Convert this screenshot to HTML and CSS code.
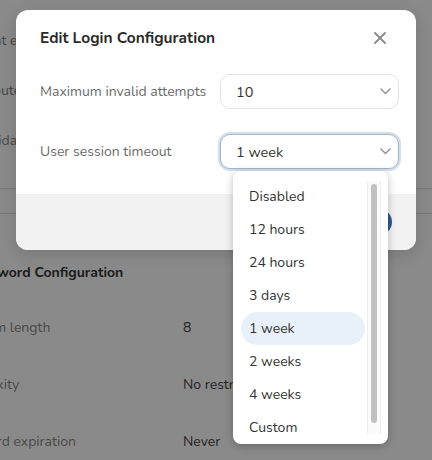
FILE: index.html
```html
<!DOCTYPE html>
<html>
<head>
<meta charset="utf-8">
<link rel="stylesheet" href="styles.css">
</head>
<body>
<div class="page">
  <div class="bg">
    <div class="bg-group">
      <div class="bg-row"><span class="bg-label">Account enabled</span><span class="bg-value">Yes</span></div>
      <div class="bg-row"><span class="bg-label">Contribute edits</span><span class="bg-value">Allowed</span></div>
      <div class="bg-row"><span class="bg-label">Consolidate sessions</span><span class="bg-value">Off</span></div>
    </div>
    <div class="bg-divider"></div>
    <div class="bg-heading">Password Configuration</div>
    <div class="bg-group">
      <div class="bg-row tall"><span class="bg-label shifted">Minimum length</span><span class="bg-value">8</span></div>
      <div class="bg-row tall"><span class="bg-label shifted">Complexity</span><span class="bg-value">No restrictions</span></div>
      <div class="bg-row tall"><span class="bg-label shifted">Password expiration</span><span class="bg-value">Never</span></div>
    </div>
  </div>
</div>
<div class="overlay"></div>
<div class="modal">
  <div class="modal-header">
    <h2 class="modal-title">Edit Login Configuration</h2>
    <svg class="close" width="12" height="12" viewBox="0 0 12 12"><path d="M1 1 L11 11 M11 1 L1 11" stroke="#8a8a8a" stroke-width="1.8" stroke-linecap="round"/></svg>
  </div>
  <div class="modal-body">
    <div class="field">
      <span class="field-label">Maximum invalid attempts</span>
      <div class="select">
        <span class="select-value">10</span>
        <svg class="chevron" width="11" height="7" viewBox="0 0 11 7"><path d="M1 1 L5.5 5.5 L10 1" fill="none" stroke="#9a9a9a" stroke-width="1.6" stroke-linecap="round" stroke-linejoin="round"/></svg>
      </div>
    </div>
    <div class="field">
      <span class="field-label">User session timeout</span>
      <div class="select-wrap">
        <div class="select focused">
          <span class="select-value">1 week</span>
          <svg class="chevron" width="11" height="7" viewBox="0 0 11 7"><path d="M1 1 L5.5 5.5 L10 1" fill="none" stroke="#9a9a9a" stroke-width="1.6" stroke-linecap="round" stroke-linejoin="round"/></svg>
        </div>
        <div class="dropdown">
          <ul class="options">
            <li class="option">Disabled</li>
            <li class="option">12 hours</li>
            <li class="option">24 hours</li>
            <li class="option">3 days</li>
            <li class="option selected">1 week</li>
            <li class="option">2 weeks</li>
            <li class="option">4 weeks</li>
            <li class="option">Custom</li>
            <li class="option">Never</li>
          </ul>
          <div class="scrolltrack"><div class="scrollthumb"></div></div>
        </div>
      </div>
    </div>
  </div>
  <div class="modal-footer">
    <button class="btn btn-cancel">Cancel</button>
    <button class="btn btn-save">Save</button>
  </div>
</div>
</body>
</html>
```

FILE: styles.css
```css
html, body {
  margin: 0;
  padding: 0;
}
body {
  width: 432px;
  height: 460px;
  overflow: hidden;
  position: relative;
  background: #ffffff;
  font-family: "Nunito", Lato, "Open Sans", sans-serif;
  color: #333333;
}
.page {
  width: 432px;
  height: 460px;
  overflow: hidden;
}
.bg {
  margin-left: -45px;
  width: 520px;
  padding-top: 15px;
}
.bg-row {
  display: flex;
  align-items: center;
  height: 50px;
  font-size: 14px;
}
.bg-row.tall {
  height: 57px;
}
.bg-label {
  width: 228px;
  color: #888888;
}
.bg-label.shifted {
  margin-left: -7px;
  width: 235px;
}
.bg-value {
  color: #444444;
}
.bg-divider {
  margin-top: 23px;
  height: 24px;
  border-top: 1px solid #e0e0e0;
  border-bottom: 1px solid #e0e0e0;
}
.bg-heading {
  margin-top: 48px;
  margin-left: 12px;
  height: 22px;
  line-height: 22px;
  font-size: 14px;
  font-weight: 700;
  color: #333333;
  margin-bottom: 15px;
}
.overlay {
  position: absolute;
  inset: 0;
  background: rgba(0, 0, 0, 0.46);
}
.modal {
  position: absolute;
  left: 16px;
  top: 10px;
  width: 400px;
  height: 240px;
  background: #ffffff;
  border-radius: 12px;
  display: flex;
  flex-direction: column;
  box-shadow: 0 4px 16px rgba(0, 0, 0, 0.15);
}
.modal-header {
  height: 64px;
  box-sizing: border-box;
  padding: 18px 30px 0 24px;
  display: flex;
  justify-content: space-between;
  align-items: flex-start;
}
.modal-title {
  margin: 0;
  font-size: 15.5px;
  line-height: 20px;
  font-weight: 700;
  color: #2a2a2a;
}
.close {
  margin-top: 4px;
}
.modal-body {
  padding: 0 17px 25px 24px;
  display: flex;
  flex-direction: column;
  gap: 25px;
}
.field {
  display: grid;
  grid-template-columns: 180px 179px;
  align-items: center;
}
.field-label {
  font-size: 14px;
  color: #6b6b6b;
}
.select-wrap {
  position: relative;
}
.select {
  height: 35px;
  box-sizing: border-box;
  border: 1px solid #e3e3e3;
  border-radius: 10px;
  display: flex;
  align-items: center;
  justify-content: space-between;
  padding: 0 7px 0 15px;
  font-size: 14.5px;
  color: #333333;
  background: #ffffff;
}
.select.focused {
  border-color: #a3b6ce;
  box-shadow: 0 0 0 2px #d3deeb;
}
.modal-footer {
  margin-top: auto;
  height: 56px;
  background: #f2f2f2;
  border-radius: 0 0 12px 12px;
  display: flex;
  align-items: center;
  justify-content: flex-end;
  gap: 12px;
  padding: 0 24px;
}
.btn {
  height: 26px;
  border-radius: 13px;
  border: none;
  font-family: inherit;
  font-size: 13px;
  padding: 0 18px;
}
.btn-cancel {
  background: transparent;
  color: #555555;
}
.btn-save {
  background: #2d5a8e;
  color: #ffffff;
  font-weight: 700;
}
.dropdown {
  position: absolute;
  left: 13px;
  top: calc(100% + 2px);
  width: 155px;
  height: 273px;
  box-sizing: border-box;
  background: #ffffff;
  border-radius: 8px;
  box-shadow: 0 2px 8px rgba(0, 0, 0, 0.25);
  display: flex;
  overflow: hidden;
  z-index: 5;
}
.options {
  list-style: none;
  margin: 0;
  padding: 9px 2px 0 8px;
  width: 124px;
}
.option {
  height: 33px;
  line-height: 33px;
  padding-left: 8px;
  border-radius: 17px;
  font-size: 14px;
  color: #333333;
  white-space: nowrap;
}
.option.selected {
  background: #e8f0fa;
}
.scrolltrack {
  margin-top: 10px;
  width: 14px;
  height: 253px;
  box-sizing: border-box;
  border-left: 1px solid #ededed;
  border-right: 1px solid #ededed;
  background: #fbfbfb;
  padding: 3px 3px 0 3px;
}
.scrollthumb {
  height: 239px;
  background: #c1c1c1;
  border-radius: 4px;
}
```
